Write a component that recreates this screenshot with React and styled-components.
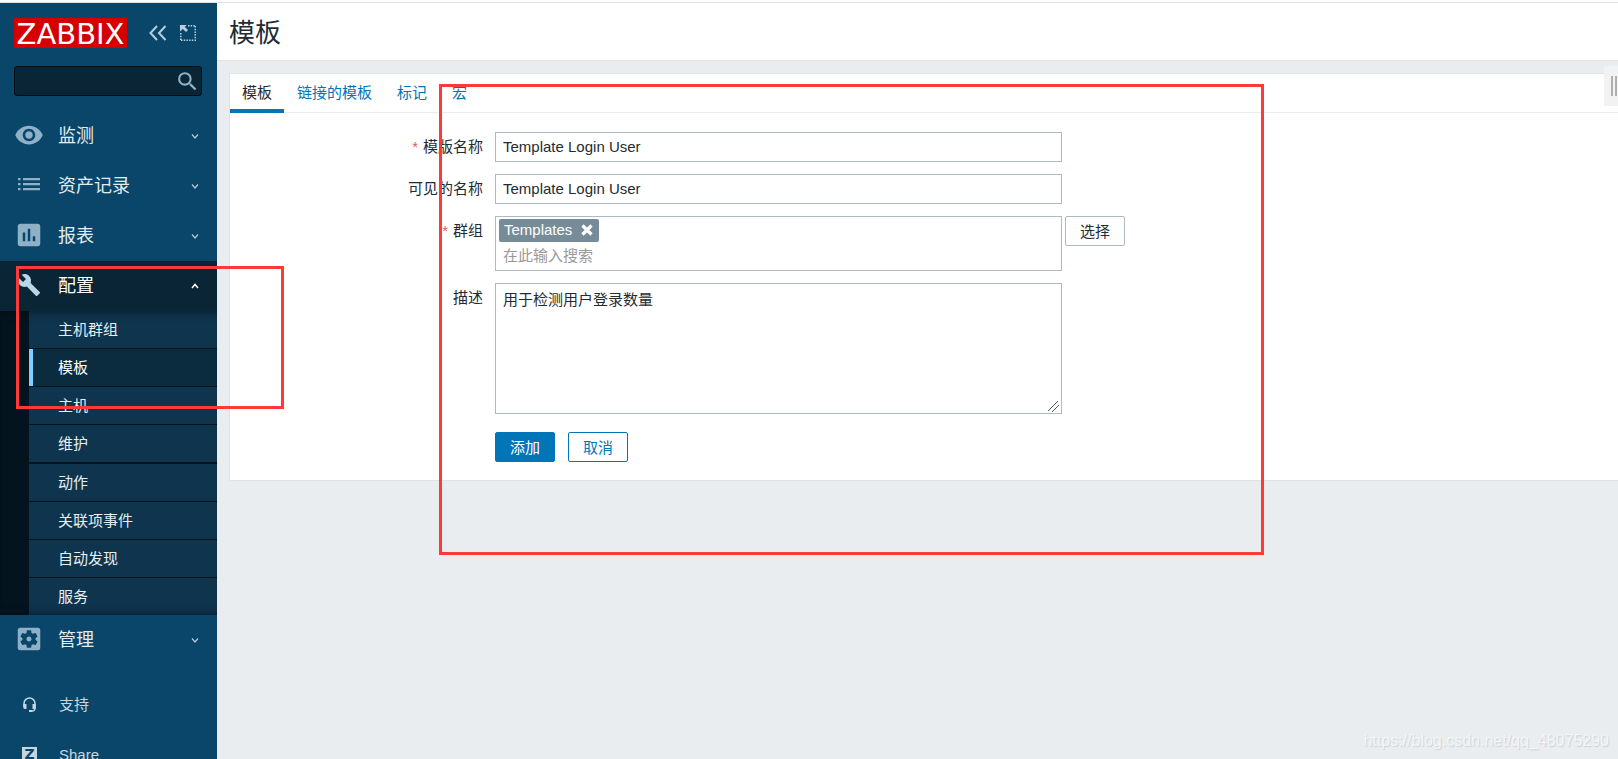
import React from "react";
import styled, { createGlobalStyle, css } from "styled-components";
import {
  MdVisibility,
  MdInsertChart,
  MdBuild,
  MdSettingsApplications,
  MdSearch,
} from "react-icons/md";

const GlobalStyle = createGlobalStyle`
  *, *::before, *::after { box-sizing: border-box; }
  body {
    margin: 0;
    background: #e9edf0;
    color: #1f2c33;
    font: 15px/20px "Liberation Sans", "Noto Sans CJK SC", sans-serif;
  }
  button, input, textarea { font: inherit; color: inherit; }
`;

const Page = styled.div`
  position: relative;
  display: flex;
  flex-direction: column;
  height: 100vh;
  overflow: hidden;
`;

const TopRule = styled.div`
  flex: none;
  height: 3px;
  background: #fff;
  border-bottom: 1px solid #dfe3e6;
`;

const Shell = styled.div`
  flex: 1;
  min-height: 0;
  display: flex;
`;

/* Sidebar */

const Sidebar = styled.aside`
  flex: none;
  width: 217px;
  overflow: hidden;
  background: #0a466a;
  color: #fff;
`;

const Brand = styled.div`
  display: flex;
  align-items: center;
  padding: 15px 20px 0 14px;
`;

const Logo = styled.a`
  width: 113px;
  height: 30px;
  margin-right: 22px;
  background: #d40000;
  color: #fff;
  font: 29px/32px "DejaVu Sans", sans-serif;
  text-align: center;
  text-decoration: none;
`;

const IconButton = styled.button`
  display: flex;
  padding: 0;
  border: 0;
  background: none;
  color: #b5cfdf;
  & + & {
    margin-left: 13px;
  }
`;

const SearchForm = styled.form`
  display: flex;
  align-items: center;
  height: 30px;
  margin: 18px 15px 15px 14px;
  padding-right: 1px;
  background: #0a2636;
  border: 1px solid #030d14;
  border-radius: 3px;
`;

const SearchInput = styled.input`
  flex: 1;
  min-width: 0;
  padding: 0 8px;
  border: 0;
  outline: 0;
  background: none;
`;

const SearchButton = styled(IconButton)`
  color: #8fb1c8;
`;

const MenuLink = styled.a`
  display: flex;
  align-items: center;
  height: 50px;
  padding-right: 18px;
  color: ${(p) => (p.$open ? "#fff" : "#e3ecf1")};
  background: ${(p) => (p.$open ? "#0a2636" : "transparent")};
  font-size: 18px;
  text-decoration: none;
`;

const MenuIcon = styled.span`
  display: flex;
  justify-content: center;
  flex: none;
  width: 58px;
  padding-bottom: 3px;
  color: ${(p) => (p.$open ? "#b9d7ea" : "#8fb1c8")};
`;

const MenuText = styled.span`
  flex: 1;
`;

const SubMenu = styled.div`
  padding-left: 29px;
  background: #04141e;
`;

const SubLinks = styled.div`
  display: flex;
  flex-direction: column;
  gap: 1px;
  position: relative;
  &::after {
    content: "";
    position: absolute;
    inset: 0 0 0 -29px;
    pointer-events: none;
    box-shadow: inset 0 10px 10px -10px rgba(0, 0, 0, 0.5),
      inset 0 -10px 10px -10px rgba(0, 0, 0, 0.5);
  }
`;

const SubLink = styled.a`
  height: 37px;
  padding-left: 29px;
  background: #0f344d;
  color: #e8eff3;
  line-height: 37px;
  text-decoration: none;
  ${(p) =>
    p.$current &&
    css`
      padding-left: 25px;
      border-left: 4px solid #80ceff;
      background: #0b2b3e;
      color: #fff;
    `}
  ${(p) => p.$section && "margin-top: 1px;"}
`;

const FooterLinks = styled.nav`
  margin-top: 15px;
`;

const FooterLink = styled(MenuLink)`
  color: #c6d6e0;
  font-size: 15px;
`;

const FooterIcon = styled(MenuIcon)`
  width: 59px;
  padding-bottom: 1px;
  color: #c6d6e0;
`;

const ShareMark = styled.span`
  width: 15px;
  height: 15px;
  background: #c6d6e0;
  color: #0a466a;
  font: bold 14px/15px "DejaVu Sans", sans-serif;
  text-align: center;
`;

/* Content */

const Content = styled.main`
  flex: 1;
  min-width: 0;
`;

const Header = styled.header`
  height: 58px;
  padding: 0 12px;
  background: #fff;
  border-bottom: 1px solid #dfe4e7;
`;

const Title = styled.h1`
  margin: 0;
  font-size: 26px;
  line-height: 60px;
  font-weight: 400;
`;

const Panel = styled.section`
  margin: 12px 0 0 12px;
  background: #fff;
  border: 1px solid #dfe4e7;
  border-right: 0;
`;

const Tabs = styled.nav`
  display: flex;
  gap: 1px;
  height: 39px;
  border-bottom: 1px solid #e9edf0;
`;

const Tab = styled.a`
  height: 39px;
  padding: 0 12px;
  color: ${(p) => (p.$active ? "#1f2c33" : "#0275b8")};
  border-bottom: ${(p) => (p.$active ? "4px solid #0275b8" : "0")};
  line-height: 38px;
  text-decoration: none;
`;

const Form = styled.form`
  display: grid;
  grid-template-columns: 253px minmax(0, 567px) auto;
  justify-content: start;
  align-items: start;
  row-gap: 12px;
  padding: 19px 12px 18px 0;
`;

const Label = styled.label`
  grid-column: 1;
  line-height: 30px;
  text-align: right;
`;

const Required = styled.span`
  margin-right: 5px;
  color: #e45959;
`;

const fieldBox = css`
  grid-column: 2;
  width: 100%;
  margin: 0 0 0 12px;
  border: 1px solid #acbbc2;
  background: #fff;
  outline: 0;
`;

const TextInput = styled.input`
  ${fieldBox}
  height: 30px;
  padding: 0 7px 2px;
`;

const TextArea = styled.textarea`
  ${fieldBox}
  height: 131px;
  padding: 6px 7px;
  resize: both;
  &::-webkit-resizer {
    background: linear-gradient(
        135deg,
        transparent 43%,
        #555 43%,
        #555 48%,
        transparent 48%,
        transparent 66%,
        #555 66%,
        #555 71%,
        transparent 71%
      )
      2px 3px / 11px 11px no-repeat;
  }
`;

const MultiSelect = styled.div`
  ${fieldBox}
  height: 55px;
  padding: 2px 3px;
`;

const Chip = styled.span`
  display: flex;
  align-items: center;
  gap: 9px;
  width: fit-content;
  height: 23px;
  padding: 0 6px 2px 5px;
  border-radius: 2px;
  background: #768d99;
  color: #fff;
`;

const ChipRemove = styled.button`
  display: flex;
  padding: 0;
  border: 0;
  background: none;
  color: #fff;
`;

const ChipInput = styled.input`
  width: 100%;
  height: 26px;
  padding: 0 4px;
  border: 0;
  outline: 0;
  background: none;
  &::placeholder {
    color: #999;
    opacity: 1;
  }
`;

const Button = styled.button`
  width: 60px;
  height: 30px;
  padding: 2px 0 0;
  border: 1px solid ${(p) => (p.$neutral ? "#acbbc2" : "#0275b8")};
  border-radius: 2px;
  background: ${(p) => (p.$primary ? "#0275b8" : "#fff")};
  color: ${(p) => (p.$primary ? "#fff" : p.$neutral ? "#1f2c33" : "#0275b8")};
`;

const SelectCell = styled.div`
  grid-column: 3;
  margin-left: 15px;
`;

const Actions = styled.div`
  grid-column: 2;
  display: flex;
  gap: 13px;
  margin: 6px 0 0 12px;
`;

/* Overlays */

const DrawerHandle = styled.button`
  position: absolute;
  top: 66px;
  right: 0;
  display: flex;
  justify-content: flex-end;
  align-items: center;
  gap: 2px;
  width: 14px;
  height: 40px;
  padding: 0 1px 0 0;
  border: 0;
  background: #f2f2f2;
`;

const HandleBar = styled.span`
  width: 2px;
  height: 20px;
  background: #b0b0b0;
`;

const Highlight = styled.div`
  position: absolute;
  top: ${(p) => p.$top}px;
  left: ${(p) => p.$left}px;
  width: ${(p) => p.$width}px;
  height: ${(p) => p.$height}px;
  border: 3px solid #ff3838;
  pointer-events: none;
`;

const Watermark = styled.span`
  position: absolute;
  right: 9px;
  bottom: 8px;
  color: #f3f5f6;
  font-size: 16px;
  text-shadow: 1px 1px 1px #cdd1d4;
`;

function ListIcon() {
  return (
    <svg width="24" height="14" viewBox="0 0 24 14" fill="currentColor" aria-hidden="true">
      <path d="M1 0h2.500v2.200H1zM6 0h17v2.200H6zM1 5h2.500v2.200H1zM6 5h17v2.200H6zM1 10h2.500v2.200H1zM6 10h17v2.200H6z" />
    </svg>
  );
}

function HeadsetIcon() {
  return (
    <svg width="15" height="16" viewBox="0 0 15 16" aria-hidden="true">
      <path d="M2 9V6.500a5.500 5.500 0 0 1 11 0v5a2.500 2.500 0 0 1-2.500 2.500H8" fill="none" stroke="currentColor" strokeWidth="1.500" />
      <path d="M1.200 7H4.500v5H3a1.800 1.800 0 0 1-1.800-1.800zM13.800 7H10.500v5H12a1.800 1.800 0 0 0 1.800-1.800zM7 13h3v2H7z" fill="currentColor" />
    </svg>
  );
}

function CollapseIcon() {
  return (
    <svg width="18" height="16" viewBox="0 0 18 16" fill="none" stroke="currentColor" strokeWidth="2" aria-hidden="true">
      <path d="M8 1L1.500 8 8 15M16.500 1L10 8l6.500 7" />
    </svg>
  );
}

function CompactIcon() {
  return (
    <svg width="16" height="16" viewBox="0 0 16 16" aria-hidden="true">
      <path d="M8 .75h8M15.250 1v15M1 15.250h14M.75 8v7" fill="none" stroke="currentColor" strokeWidth="1.500" strokeDasharray="1.500 1.200" />
      <path d="M0 0h6.500L4.900 1.900 8 5.100 6 7 2.900 3.900 0 6.500z" fill="currentColor" />
    </svg>
  );
}

function Chevron({ up }) {
  return (
    <svg width="8" height="8" viewBox="0 0 8 8" fill="none" stroke="currentColor" strokeWidth={up ? 1.5 : 1.2} opacity={up ? 1 : 0.8} aria-hidden="true">
      <path d={up ? "M1 6l3-3.500L7 6" : "M1 2.500L4 6l3-3.500"} />
    </svg>
  );
}

function CrossIcon() {
  return (
    <svg width="12" height="12" viewBox="0 0 12 12" stroke="currentColor" strokeWidth="3.200" aria-hidden="true">
      <path d="M1.500 1.500l9 9M10.500 1.500l-9 9" />
    </svg>
  );
}

const subItems = [
  { text: "主机群组" },
  { text: "模板", current: true },
  { text: "主机" },
  { text: "维护" },
  { text: "动作", section: true },
  { text: "关联项事件" },
  { text: "自动发现" },
  { text: "服务" },
];

const menu = [
  { text: "监测", icon: <MdVisibility size={30} /> },
  { text: "资产记录", icon: <ListIcon /> },
  { text: "报表", icon: <MdInsertChart size={30} /> },
  { text: "配置", icon: <MdBuild size={24} />, children: subItems },
  { text: "管理", icon: <MdSettingsApplications size={30} /> },
];

const tabs = ["模板", "链接的模板", "标记", "宏"];

function MenuItem({ text, icon, children }) {
  const open = Boolean(children);
  return (
    <>
      <MenuLink href="#" $open={open}>
        <MenuIcon $open={open}>{icon}</MenuIcon>
        <MenuText>{text}</MenuText>
        <Chevron up={open} />
      </MenuLink>
      {open && (
        <SubMenu>
          <SubLinks>
            {children.map((item) => (
              <SubLink key={item.text} href="#" $current={item.current} $section={item.section}>
                {item.text}
              </SubLink>
            ))}
          </SubLinks>
        </SubMenu>
      )}
    </>
  );
}

export default function App() {
  return (
    <Page>
      <GlobalStyle />
      <TopRule />
      <Shell>
        <Sidebar>
          <Brand>
            <Logo href="#">ZABBIX</Logo>
            <IconButton type="button" aria-label="收起侧栏"><CollapseIcon /></IconButton>
            <IconButton type="button" aria-label="隐藏侧栏"><CompactIcon /></IconButton>
          </Brand>
          <SearchForm role="search">
            <SearchInput type="text" aria-label="搜索" />
            <SearchButton type="button" aria-label="搜索"><MdSearch size={25} /></SearchButton>
          </SearchForm>
          <nav>
            {menu.map((item) => (
              <MenuItem key={item.text} {...item} />
            ))}
          </nav>
          <FooterLinks>
            <FooterLink href="#">
              <FooterIcon><HeadsetIcon /></FooterIcon>支持
            </FooterLink>
            <FooterLink href="#">
              <FooterIcon><ShareMark>Z</ShareMark></FooterIcon>Share
            </FooterLink>
          </FooterLinks>
        </Sidebar>

        <Content>
          <Header><Title>模板</Title></Header>
          <Panel>
            <Tabs>
              {tabs.map((tab, i) => (
                <Tab key={tab} href="#" $active={i === 0}>{tab}</Tab>
              ))}
            </Tabs>
            <Form>
              <Label htmlFor="template-name"><Required>*</Required>模版名称</Label>
              <TextInput id="template-name" type="text" defaultValue="Template Login User" />

              <Label htmlFor="visible-name">可见的名称</Label>
              <TextInput id="visible-name" type="text" defaultValue="Template Login User" />

              <Label htmlFor="groups"><Required>*</Required>群组</Label>
              <MultiSelect>
                <Chip>
                  Templates
                  <ChipRemove type="button" aria-label="移除"><CrossIcon /></ChipRemove>
                </Chip>
                <ChipInput id="groups" type="text" placeholder="在此输入搜索" />
              </MultiSelect>
              <SelectCell><Button type="button" $neutral>选择</Button></SelectCell>

              <Label htmlFor="description">描述</Label>
              <TextArea id="description" defaultValue="用于检测用户登录数量" />

              <Actions>
                <Button type="button" $primary>添加</Button>
                <Button type="button">取消</Button>
              </Actions>
            </Form>
          </Panel>
        </Content>
      </Shell>

      <DrawerHandle type="button" aria-label="展开"><HandleBar /><HandleBar /></DrawerHandle>
      <Watermark>https://blog.csdn.net/qq_48075290</Watermark>
      <Highlight $left={16} $top={266} $width={268} $height={143} />
      <Highlight $left={439} $top={84} $width={825} $height={471} />
    </Page>
  );
}
